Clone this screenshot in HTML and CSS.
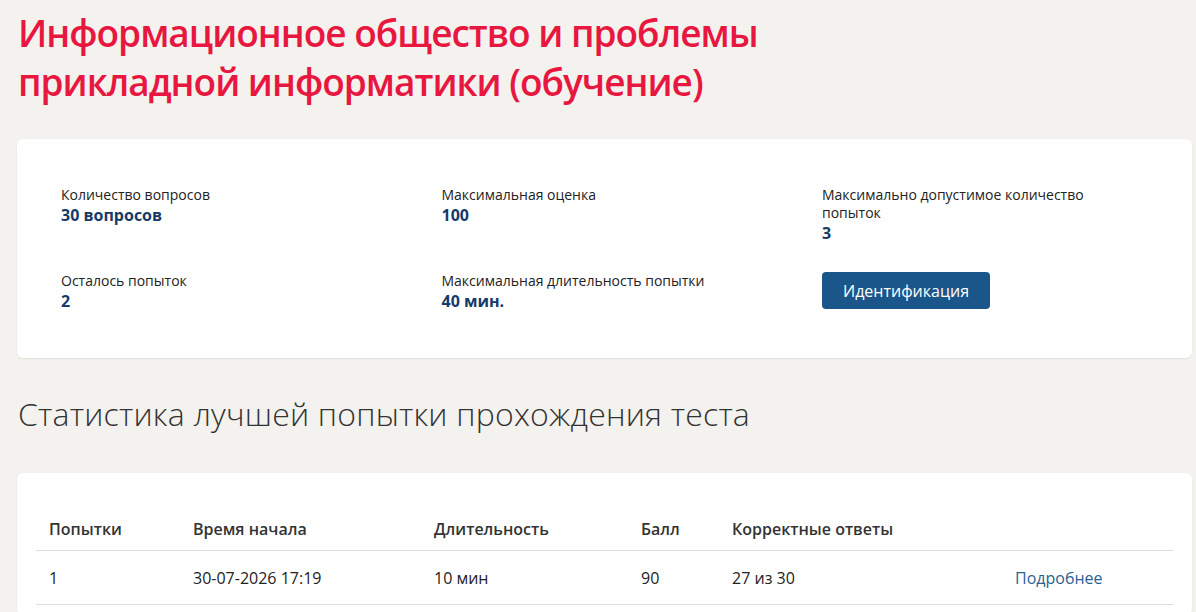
FILE: index.html
```html
<!DOCTYPE html>
<html lang="ru">
<head>
  <meta charset="UTF-8">
  <meta name="viewport" content="width=device-width, initial-scale=1.0">
  <title>Информационное общество и проблемы прикладной информатики (обучение)</title>
  <link rel="stylesheet" href="styles.css">
</head>
<body>
  <main class="page">
    <h1 class="test-title">Информационное общество и проблемы прикладной информатики (обучение)</h1>

    <section class="card test-info">
      <div class="info-grid">
        <div class="info-item">
          <div class="info-label">Количество вопросов</div>
          <div class="info-value">30 вопросов</div>
        </div>
        <div class="info-item">
          <div class="info-label">Максимальная оценка</div>
          <div class="info-value">100</div>
        </div>
        <div class="info-item">
          <div class="info-label">Максимально допустимое количество попыток</div>
          <div class="info-value">3</div>
        </div>
        <div class="info-item">
          <div class="info-label">Осталось попыток</div>
          <div class="info-value">2</div>
        </div>
        <div class="info-item">
          <div class="info-label">Максимальная длительность попытки</div>
          <div class="info-value">40 мин.</div>
        </div>
        <div class="info-item">
          <button class="btn-primary">Идентификация</button>
        </div>
      </div>
    </section>

    <h2 class="section-title">Статистика лучшей попытки прохождения теста</h2>

    <section class="card attempts">
      <table class="attempts-table">
        <thead>
          <tr>
            <th class="col-num">Попытки</th>
            <th class="col-start">Время начала</th>
            <th class="col-duration">Длительность</th>
            <th class="col-score">Балл</th>
            <th class="col-correct">Корректные ответы</th>
            <th class="col-link"></th>
          </tr>
        </thead>
        <tbody>
          <tr>
            <td>1</td>
            <td>30-07-2026 17:19</td>
            <td>10 мин</td>
            <td>90</td>
            <td>27 из 30</td>
            <td><a href="#" class="details-link">Подробнее</a></td>
          </tr>
        </tbody>
      </table>
    </section>
  </main>
</body>
</html>
```

FILE: styles.css
```css
/* Base */
body {
  margin: 0;
  background-color: #f3f2ef;
  color: #222;
  font-family: "Open Sans", Arial, sans-serif;
}

.page {
  padding: 8px 4px 0 17px;
}

.test-title {
  margin: 0 0 33px 1px;
  max-width: 780px;
  font-size: 37px;
  line-height: 49px;
  font-weight: 600;
  letter-spacing: -1px;
  color: #e8173f;
}

/* Cards */
.card {
  background-color: #fff;
  border-radius: 6px;
  box-shadow: 0 1px 2px rgba(0, 0, 0, 0.08);
}

.test-info {
  padding: 47px 44px 46px;
}

.info-grid {
  display: grid;
  grid-template-columns: repeat(3, 300px);
  column-gap: 80.5px;
  row-gap: 28px;
}

.info-label {
  font-size: 14px;
  line-height: 18px;
  color: #222;
}

.info-value {
  font-size: 16px;
  line-height: 22px;
  font-weight: 700;
  color: #163b6a;
}

.btn-primary {
  height: 37px;
  padding: 0 21px;
  border: none;
  border-radius: 4px;
  background-color: #1b568a;
  color: #fff;
  font-family: "Open Sans", Arial, sans-serif;
  font-size: 16px;
  cursor: pointer;
}

.btn-primary:hover {
  background-color: #174a78;
}

/* Attempts */
.section-title {
  margin: 36px 0 39px 1px;
  font-size: 32px;
  line-height: 40px;
  font-weight: 300;
  letter-spacing: 0.2px;
  color: #333;
}

.attempts {
  padding: 34px 19px 10px;
}

.attempts-table {
  width: 100%;
  border-collapse: collapse;
  font-size: 16px;
  line-height: 20px;
}

.attempts-table th {
  padding: 12px 13px 11px;
  text-align: left;
  font-weight: 600;
  color: #333;
  border-bottom: 1px solid #deddd9;
}

.attempts-table td {
  padding: 17px 13px 16px;
  color: #222;
  border-bottom: 1px solid #deddd9;
}

.col-num { width: 118px; }
.col-start { width: 215px; }
.col-duration { width: 181px; }
.col-score { width: 65px; }
.col-correct { width: 257px; }

.details-link {
  color: #2a5f95;
  text-decoration: none;
}

.details-link:hover {
  text-decoration: underline;
}
```
